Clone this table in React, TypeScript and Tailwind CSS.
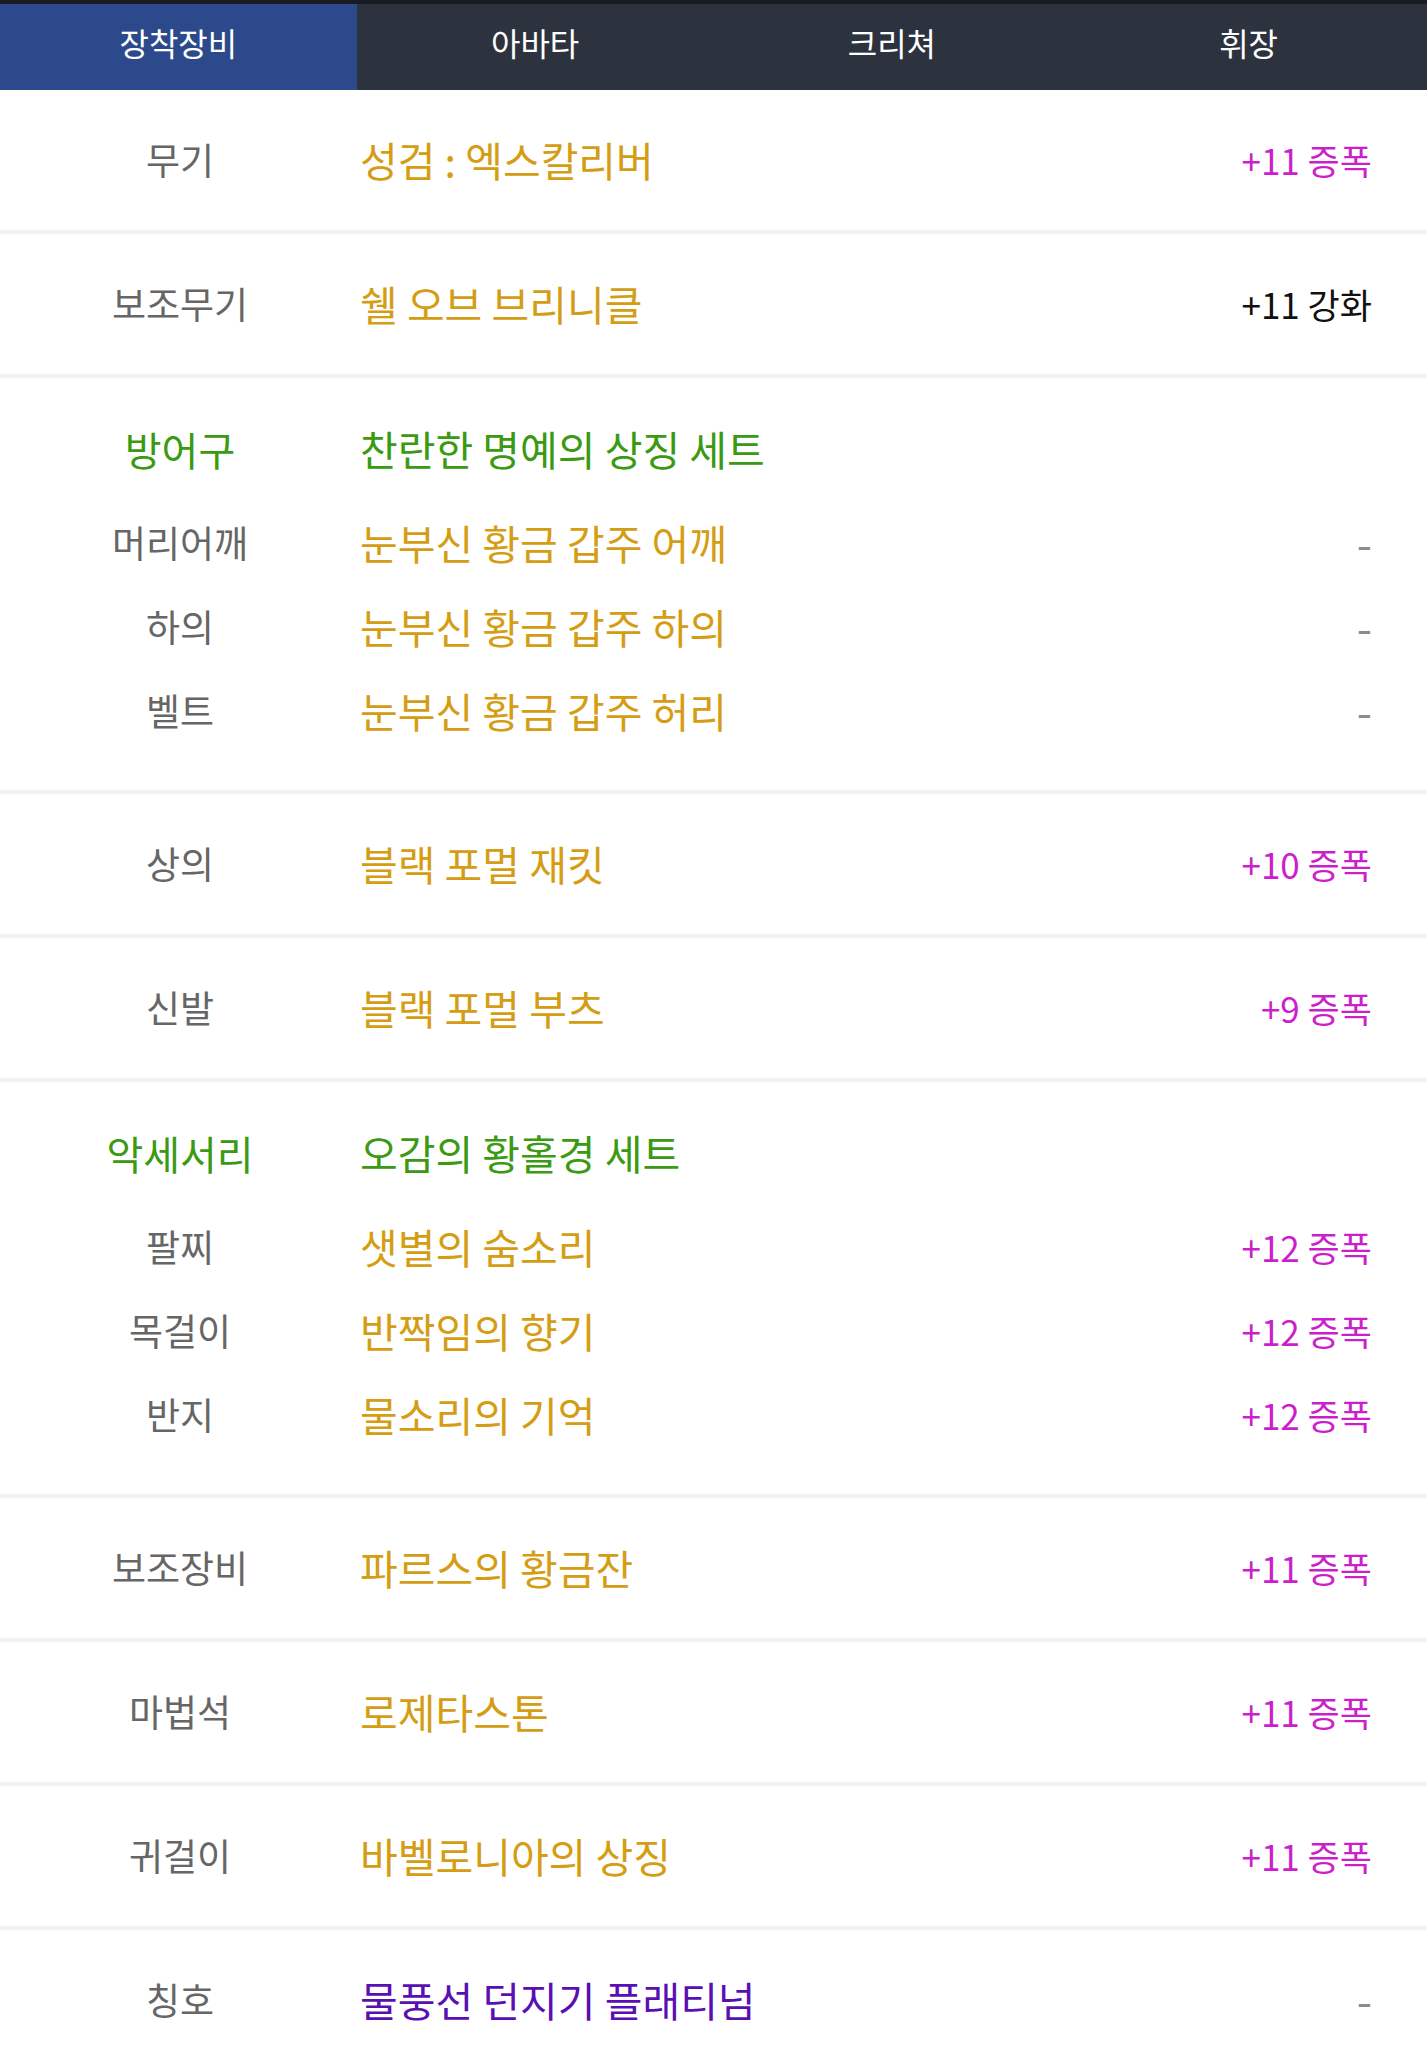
import React from "react";

type Row = { label: string; name: string; right?: string; kind?: "amp" | "enh" | "none"; nameColor?: string };

const GOLD = "text-[#d49d14]";

function RightValue({ right, kind }: { right?: string; kind?: string }) {
  if (kind === "none" || !right) {
    return <span className="text-[44px] leading-none text-[#8c8c8c]">-</span>;
  }
  if (kind === "enh") {
    return <span className="text-[35px] text-[#111111]">{right}</span>;
  }
  return <span className="text-[35px] text-[#cc1fcc]">{right}</span>;
}

function SimpleRow({ r }: { r: Row }) {
  return (
    <div className="flex items-center h-[144px] border-b-4 border-[#f2f2f2]">
      <div className="w-[360px] text-center text-[37px] text-[#666666]">{r.label}</div>
      <div className={`flex-1 text-[41px] ${r.nameColor ?? GOLD}`}>{r.name}</div>
      <div className="pr-[55px]">
        <RightValue right={r.right} kind={r.kind} />
      </div>
    </div>
  );
}

function Group({ label, setName, items }: { label: string; setName: string; items: Row[] }) {
  return (
    <div className="pt-[29px] pb-[37px] border-b-4 border-[#f2f2f2]">
      <div className="flex items-center h-[84px] mb-[10px]">
        <div className="w-[360px] text-center text-[40px] text-[#3a9a12]">{label}</div>
        <div className="flex-1 text-[41px] text-[#3a9a12]">{setName}</div>
      </div>
      {items.map((r) => (
        <div key={r.label} className="flex items-center h-[84px]">
          <div className="w-[360px] text-center text-[37px] text-[#666666]">{r.label}</div>
          <div className={`flex-1 text-[41px] ${GOLD}`}>{r.name}</div>
          <div className="pr-[55px]">
            <RightValue right={r.right} kind={r.kind} />
          </div>
        </div>
      ))}
    </div>
  );
}

export default function App() {
  const tabs = ["장착장비", "아바타", "크리쳐", "휘장"];
  return (
    <div className="w-[1427px] min-h-[2066px] bg-white font-['Noto_Sans_CJK_KR','Noto_Sans',sans-serif]">
      <div className="h-[4px] bg-[#181b22]" />
      <div className="flex h-[86px]">
        {tabs.map((t, i) => (
          <div
            key={t}
            className={`flex-1 flex items-center justify-center pb-[10px] text-[32px] text-white ${
              i === 0 ? "bg-[#2c4a8b]" : "bg-[#2d333e]"
            }`}
          >
            {t}
          </div>
        ))}
      </div>
      <SimpleRow r={{ label: "무기", name: "성검 : 엑스칼리버", right: "+11 증폭", kind: "amp" }} />
      <SimpleRow r={{ label: "보조무기", name: "쉘 오브 브리니클", right: "+11 강화", kind: "enh" }} />
      <Group
        label="방어구"
        setName="찬란한 명예의 상징 세트"
        items={[
          { label: "머리어깨", name: "눈부신 황금 갑주 어깨", kind: "none" },
          { label: "하의", name: "눈부신 황금 갑주 하의", kind: "none" },
          { label: "벨트", name: "눈부신 황금 갑주 허리", kind: "none" },
        ]}
      />
      <SimpleRow r={{ label: "상의", name: "블랙 포멀 재킷", right: "+10 증폭", kind: "amp" }} />
      <SimpleRow r={{ label: "신발", name: "블랙 포멀 부츠", right: "+9 증폭", kind: "amp" }} />
      <Group
        label="악세서리"
        setName="오감의 황홀경 세트"
        items={[
          { label: "팔찌", name: "샛별의 숨소리", right: "+12 증폭", kind: "amp" },
          { label: "목걸이", name: "반짝임의 향기", right: "+12 증폭", kind: "amp" },
          { label: "반지", name: "물소리의 기억", right: "+12 증폭", kind: "amp" },
        ]}
      />
      <SimpleRow r={{ label: "보조장비", name: "파르스의 황금잔", right: "+11 증폭", kind: "amp" }} />
      <SimpleRow r={{ label: "마법석", name: "로제타스톤", right: "+11 증폭", kind: "amp" }} />
      <SimpleRow r={{ label: "귀걸이", name: "바벨로니아의 상징", right: "+11 증폭", kind: "amp" }} />
      <SimpleRow r={{ label: "칭호", name: "물풍선 던지기 플래티넘", kind: "none", nameColor: "text-[#5a0fb3]" }} />
    </div>
  );
}
